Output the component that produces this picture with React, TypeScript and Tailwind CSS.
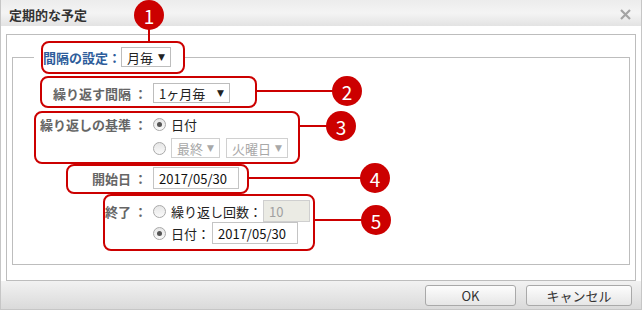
import type { ReactNode } from 'react';

const font = "font-['Noto_Sans_CJK_JP','Noto_Sans',sans-serif]";

function Select({ text, className, disabled }: { text: string; className: string; disabled?: boolean }) {
  return (
    <div
      className={`flex h-[20px] items-center justify-between whitespace-nowrap border bg-white pl-[5px] pr-[5px] text-[13px] leading-none ${
        disabled ? 'border-[#d0d0d0] text-[#a8a8a8]' : 'border-[#bdbdbd] text-[#222]'
      } ${className}`}
    >
      <span>{text}</span>
      <span className="font-['DejaVu_Sans',sans-serif] text-[9px]">▼</span>
    </div>
  );
}

function Radio({ checked }: { checked?: boolean }) {
  return (
    <span className="flex h-[13px] w-[13px] shrink-0 items-center justify-center rounded-full border border-[#a9a9a9] bg-gradient-to-b from-[#e6e6e6] to-[#fafafa]">
      {checked && <span className="h-[5px] w-[5px] rounded-full bg-[#555]" />}
    </span>
  );
}

function TextBox({ value, className, disabled }: { value: string; className: string; disabled?: boolean }) {
  return (
    <div
      className={`flex h-[22px] shrink-0 items-center border pl-[5px] text-[13px] leading-none ${
        disabled ? 'border-[#cfcfcf] bg-[#ebebe4] text-[#a0a0a0]' : 'border-[#c4c4c4] bg-white text-[#111]'
      } ${className}`}
    >
      {value}
    </div>
  );
}

function Label({ children }: { children: ReactNode }) {
  return (
    <div className="w-[134px] shrink-0 whitespace-nowrap text-right text-[13px] font-bold leading-none text-[#666]">
      {children}
      <span className="ml-[3px]">：</span>
    </div>
  );
}

function Marker({ n, className }: { n: number; className: string }) {
  return (
    <div
      className={`absolute flex h-[30px] w-[30px] items-center justify-center rounded-full bg-[#cc0000] text-[19px] leading-none text-white ${className}`}
    >
      {n}
    </div>
  );
}

export default function App() {
  return (
    <div className={`relative flex h-[310px] w-[642px] flex-col border-x border-b border-[#c6c6c6] bg-white ${font}`}>
      {/* title */}
      <div className="flex h-[26px] shrink-0 items-center justify-between bg-gradient-to-b from-[#ececec] via-[#f4f4f4] to-[#e3e3e3] pl-[8px] pr-[10px] pt-[3px]">
        <span className="text-[13px] font-bold leading-none text-[#333]">定期的な予定</span>
        <svg width="11" height="11" viewBox="0 0 11 11">
          <path d="M1 1 L10 10 M10 1 L1 10" stroke="#a4a4a4" strokeWidth="2.2" />
        </svg>
      </div>

      <div className="shrink-0 px-[5px] pt-[8px]">
        <div className="h-[247px] border border-[#bdbdbd] bg-white">
          <fieldset className="mx-[5px] mt-[11px] h-[219px] border border-[#bdbdbd]">
            <legend className="ml-[21px] pl-[9px] pr-[12px]">
              <div className="flex h-[22px] items-center whitespace-nowrap">
                <span className="text-[13px] font-bold leading-none text-[#2e5d9b]">間隔の設定：</span>
                <Select text="月毎" className="w-[50px]" />
              </div>
            </legend>

            <div className="flex flex-col">
              <div className="mt-[14px] flex h-[22px] items-center">
                <Label>繰り返す間隔</Label>
                <Select text="1ヶ月毎" className="ml-[6px] w-[77px]" />
              </div>

              <div className="mt-[8px] flex">
                <div className="flex h-[24px] items-center">
                  <Label>繰り返しの基準</Label>
                </div>
                <div className="ml-[6px] flex flex-col">
                  <div className="flex h-[24px] items-center gap-[5px] text-[13px] leading-none text-[#222]">
                    <Radio checked />
                    <span>日付</span>
                  </div>
                  <div className="flex h-[24px] items-center">
                    <Radio />
                    <Select text="最終" disabled className="ml-[5px] w-[49px]" />
                    <Select text="火曜日" disabled className="ml-[6px] w-[62px]" />
                  </div>
                </div>
              </div>

              <div className="mt-[7px] flex h-[22px] items-center">
                <Label>開始日</Label>
                <TextBox value="2017/05/30" className="ml-[6px] w-[86px]" />
              </div>

              <div className="mt-[11px] flex">
                <div className="flex h-[22px] items-center">
                  <Label>終了</Label>
                </div>
                <div className="ml-[6px] flex flex-col whitespace-nowrap text-[13px] leading-none text-[#222]">
                  <div className="flex h-[22px] items-center">
                    <Radio />
                    <span className="ml-[5px] w-[92px]">繰り返し回数：</span>
                    <TextBox value="10" disabled className="w-[47px]" />
                  </div>
                  <div className="flex h-[22px] items-center">
                    <Radio checked />
                    <span className="ml-[5px] w-[41px]">日付：</span>
                    <TextBox value="2017/05/30" className="w-[86px]" />
                  </div>
                </div>
              </div>
            </div>
          </fieldset>
        </div>
      </div>

      {/* footer */}
      <div className="flex flex-1 items-center justify-end gap-[10px] bg-gradient-to-b from-[#f2f2f2] to-[#dadada] pr-[9px]">
        <button className="h-[21px] w-[91px] rounded-[3px] border border-[#a9a9a9] bg-gradient-to-b from-[#fdfdfd] to-[#e6e6e6] text-[13px] leading-none text-[#333]">
          OK
        </button>
        <button className="h-[21px] w-[106px] rounded-[3px] border border-[#a9a9a9] bg-gradient-to-b from-[#fdfdfd] to-[#e6e6e6] text-[13px] leading-none text-[#333]">
          キャンセル
        </button>
      </div>

      {/* annotations */}
      <div className="absolute left-[40px] top-[41px] h-[33px] w-[144px] rounded-[8px] border-2 border-[#cc0000]" />
      <div className="absolute left-[147px] top-[28px] h-[14px] w-[2px] bg-[#cc0000]" />
      <Marker n={1} className="left-[133px] top-0" />

      <div className="absolute left-[39px] top-[76px] h-[32px] w-[217px] rounded-[8px] border-2 border-[#cc0000]" />
      <div className="absolute left-[255px] top-[90px] h-[2px] w-[77px] bg-[#cc0000]" />
      <Marker n={2} className="left-[331px] top-[76px]" />

      <div className="absolute left-[33px] top-[111px] h-[53px] w-[266px] rounded-[8px] border-2 border-[#cc0000]" />
      <div className="absolute left-[298px] top-[125px] h-[2px] w-[28px] bg-[#cc0000]" />
      <Marker n={3} className="left-[325px] top-[111px]" />

      <div className="absolute left-[65px] top-[164px] h-[30px] w-[183px] rounded-[8px] border-2 border-[#cc0000]" />
      <div className="absolute left-[247px] top-[177px] h-[2px] w-[113px] bg-[#cc0000]" />
      <Marker n={4} className="left-[359px] top-[163px]" />

      <div className="absolute left-[102px] top-[194px] h-[57px] w-[212px] rounded-[8px] border-2 border-[#cc0000]" />
      <div className="absolute left-[313px] top-[219px] h-[2px] w-[48px] bg-[#cc0000]" />
      <Marker n={5} className="left-[360px] top-[205px]" />
    </div>
  );
}
